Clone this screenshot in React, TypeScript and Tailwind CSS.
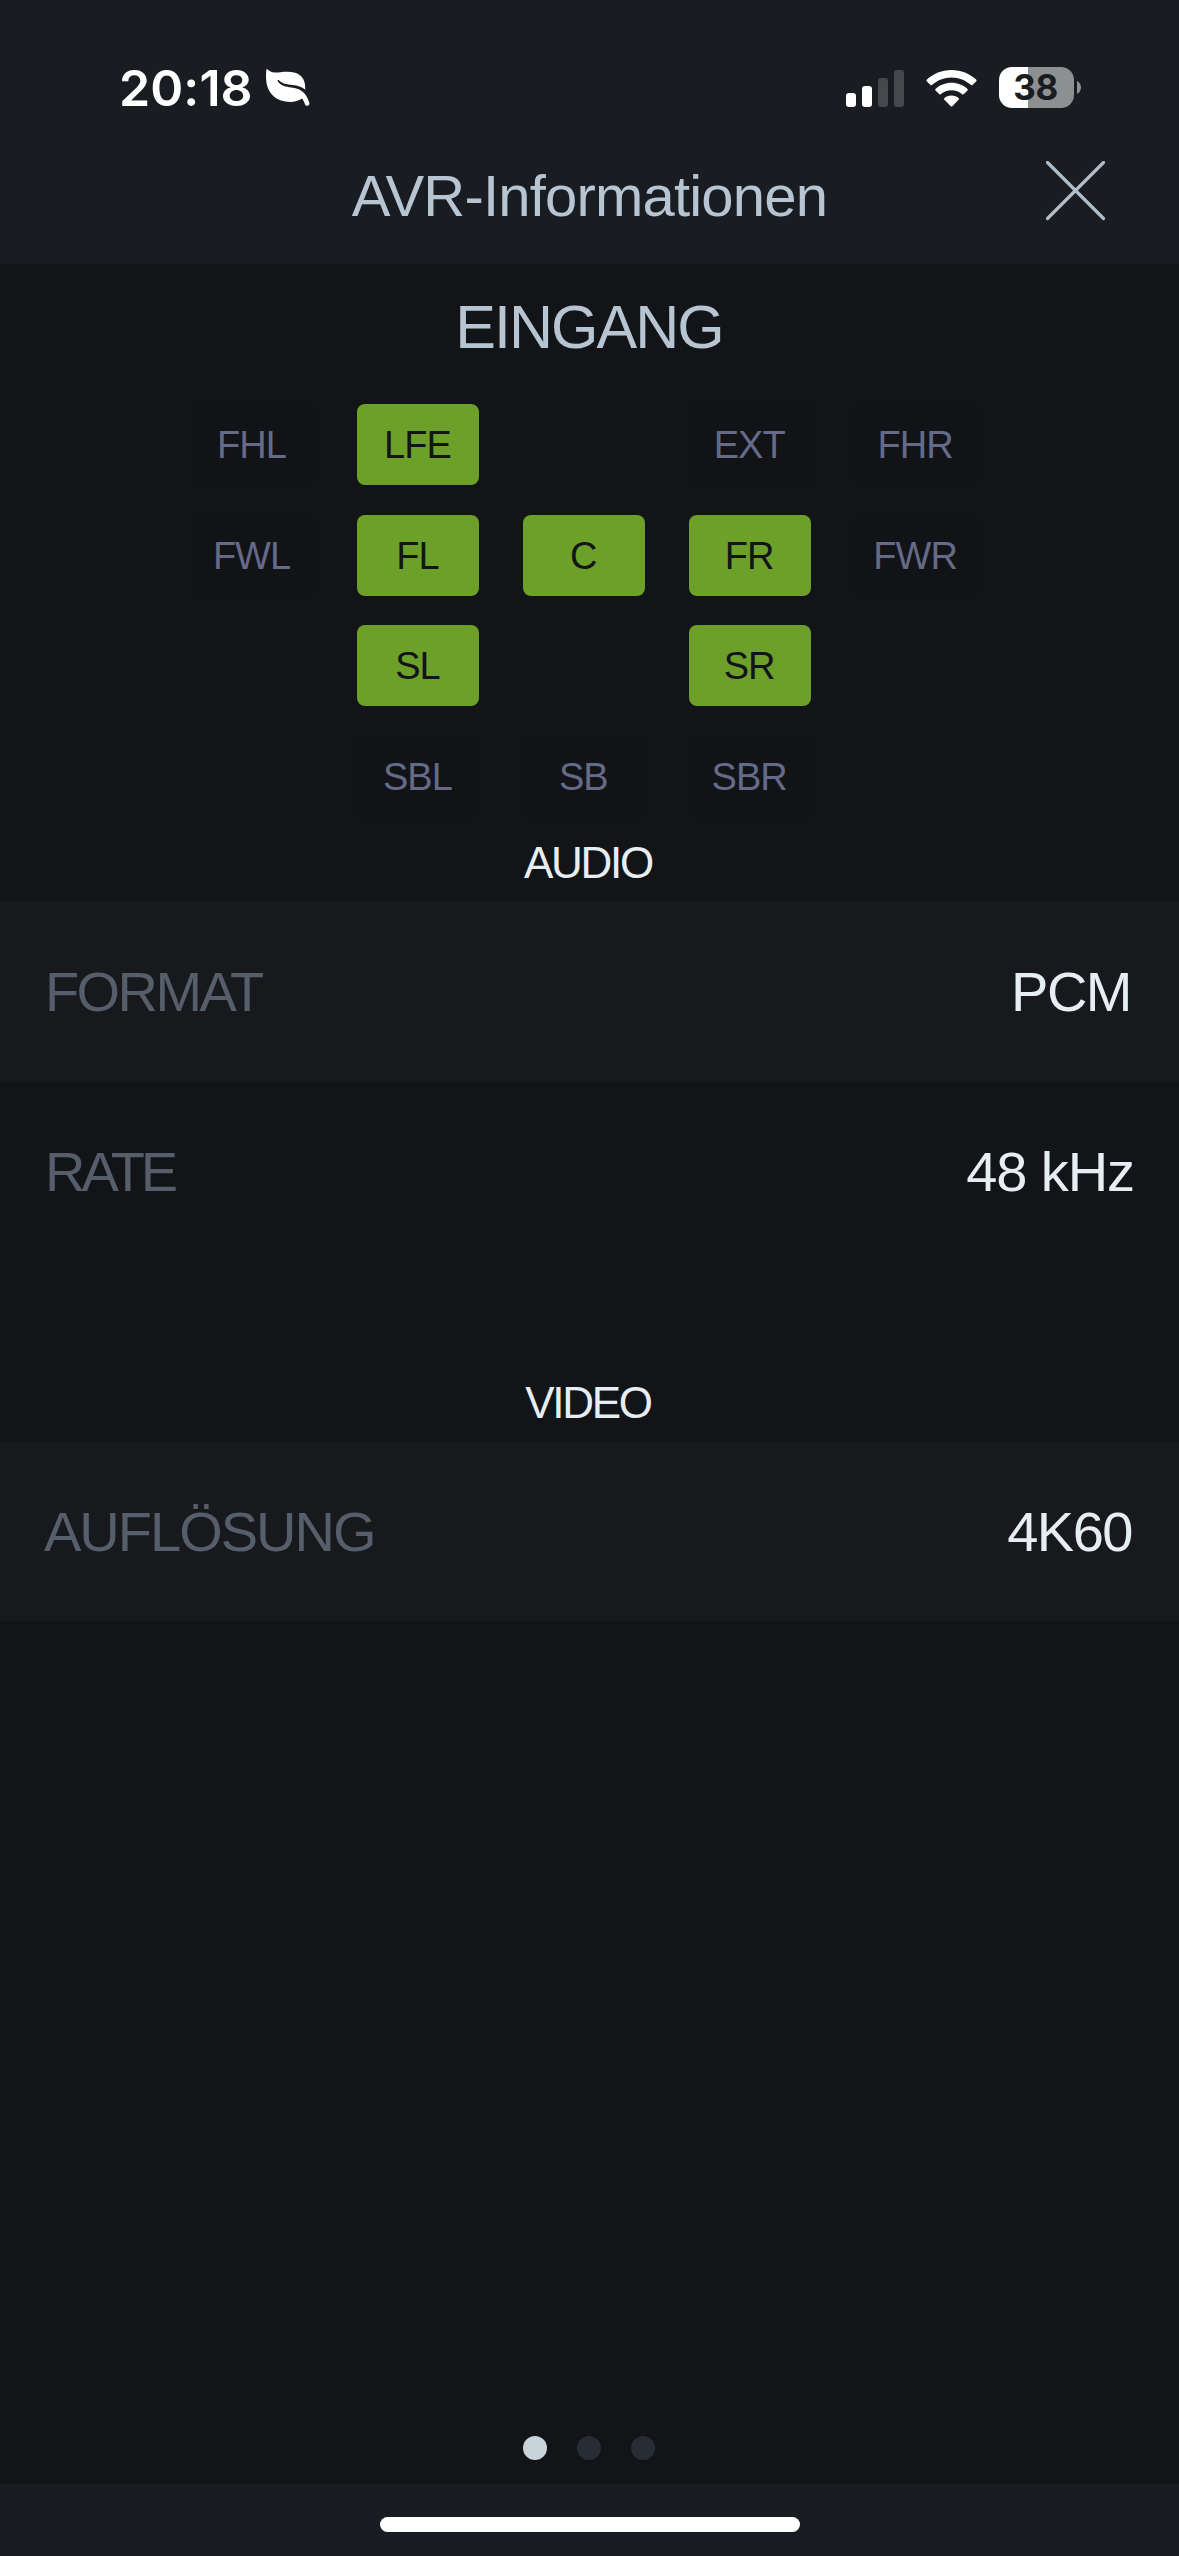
import { clsx } from "clsx";

type Speaker = { label: string; active?: boolean } | null;

const speakers: Speaker[] = [
  { label: "FHL" },
  { label: "LFE", active: true },
  null,
  { label: "EXT" },
  { label: "FHR" },
  { label: "FWL" },
  { label: "FL", active: true },
  { label: "C", active: true },
  { label: "FR", active: true },
  { label: "FWR" },
  null,
  { label: "SL", active: true },
  null,
  { label: "SR", active: true },
  null,
  null,
  { label: "SBL" },
  { label: "SB" },
  { label: "SBR" },
  null,
];

function LeafIcon() {
  return (
    <svg width="46" height="40" viewBox="0 0 46 40" fill="none">
      <path
        d="M2.6 1.4C6 4.6 10.5 4.7 15.5 4.2C22 3.5 30 3.2 35 7.2C39 10.4 40.6 15.5 40.2 21.8C36.8 18.6 32.6 17.4 27.5 16.9C21.5 16.3 17 15.6 14 12.2C13.2 11.4 12.2 12.3 12.8 13.3C15.6 17.8 20.6 18.9 26.5 19.5C32 20.1 36.2 21.7 39.3 25.2C41.6 27.8 43 31 44.3 34.8C45.2 37.6 41.2 39 40 36.4C39.2 34.4 38.6 32.4 37 30.6C32.4 33.9 26.4 34.6 20.4 33.6C10.8 32 3.4 25.4 1.6 15.4C.8 10.6 .9 6.2 1.3 2C1.4 1.1 2 .8 2.6 1.4Z"
        fill="#fff"
      />
    </svg>
  );
}

function SignalIcon() {
  return (
    <svg width="58" height="38" viewBox="0 0 58 38">
      <rect x="0" y="24" width="10" height="14" rx="3" fill="#fff" />
      <rect x="16" y="17" width="10" height="21" rx="3" fill="#fff" />
      <rect x="32" y="9" width="10" height="29" rx="3" fill="#47484c" />
      <rect x="48" y="1" width="10" height="37" rx="3" fill="#47484c" />
    </svg>
  );
}

function WifiIcon() {
  return (
    <svg width="51" height="38" viewBox="0 0 51 38" fill="#fff">
      <path d="M25.5 1C35 1 43.800 4.600 50.300 10.800Q51 11.500 50.300 12.200L46.500 16Q45.800 16.600 45.100 16C39.800 11.200 32.900 8.400 25.500 8.400S11.200 11.200 5.900 16Q5.200 16.600 4.500 16L.7 12.200Q0 11.500.7 10.800C7.200 4.600 16 1 25.500 1Z" />
      <path d="M25.500 13.800C31.700 13.800 37.300 16.100 41.500 20Q42.200 20.700 41.500 21.400L37.600 25.200Q36.900 25.800 36.200 25.200C33.300 22.700 29.600 21.200 25.500 21.200S17.700 22.700 14.800 25.200Q14.100 25.800 13.400 25.200L9.500 21.400Q8.800 20.700 9.500 20C13.700 16.100 19.300 13.800 25.500 13.800Z" />
      <path d="M25.500 26.500C28.300 26.500 30.800 27.500 32.800 29.200Q33.500 29.900 32.800 30.600L26.300 37.200Q25.500 37.900 24.700 37.200L18.200 30.600Q17.500 29.900 18.200 29.200C20.200 27.500 22.700 26.500 25.500 26.500Z" />
    </svg>
  );
}

function Battery() {
  return (
    <div className="flex items-center gap-[3px]">
      <div className="flex h-[41px] w-[75px] items-center justify-center rounded-[13px] bg-linear-to-r from-white from-[29px] to-[#8e8f91] to-[29px] pr-0.5 font-[Inter,sans-serif] text-[35px] leading-[41px] font-bold tracking-[-0.5px] text-[#191c21]">
        38
      </div>
      <svg width="4" height="13" viewBox="0 0 4 13">
        <path d="M0 0C2.400 1.100 4 3.600 4 6.500S2.400 11.900 0 13Z" fill="#8e8f91" />
      </svg>
    </div>
  );
}

function StatusBar() {
  return (
    <div className="flex h-32 items-center justify-between pt-[47px] pr-[98px] pl-[119px]">
      <div className="flex items-center">
        <span className="font-[Inter,sans-serif] text-[50px] leading-[50px] font-semibold tracking-[0.1px] text-white">
          20:18
        </span>
        <span className="ml-3">
          <LeafIcon />
        </span>
      </div>
      <div className="flex items-center">
        <SignalIcon />
        <span className="mr-[22px] ml-[22px]">
          <WifiIcon />
        </span>
        <Battery />
      </div>
    </div>
  );
}

function TitleBar() {
  return (
    <div className="grid h-[136px] grid-cols-[1fr_auto_1fr] items-center">
      <span />
      <h1 className="text-[58px] leading-[60px] tracking-[-0.8px] text-[#b7c4d1]">
        AVR-Informationen
      </h1>
      <button
        aria-label="Schließen"
        className="mt-[33px] mr-[73px] self-start justify-self-end"
      >
        <svg width="60" height="60" viewBox="0 0 60 60" fill="none">
          <path
            d="M1.500 1.500L57.500 57.500M57.500 1.500L1.500 57.500"
            stroke="#b0bdc9"
            strokeWidth="3.2"
            strokeLinecap="round"
          />
        </svg>
      </button>
    </div>
  );
}

function SpeakerGrid() {
  return (
    <div className="ml-[191.500px] grid grid-cols-[repeat(5,121.500px)] gap-x-[44.400px] gap-y-[29.600px]">
      {speakers.map((speaker, i) =>
        speaker ? (
          <div
            key={i}
            className={clsx(
              "flex h-[81px] items-center justify-center rounded-lg pt-px pr-[1.500px] text-[38px] leading-none tracking-[-1px]",
              speaker.active
                ? "bg-[#6da029] text-[#121418]"
                : "bg-[#111316] text-[#646a87]"
            )}
          >
            {speaker.label}
          </div>
        ) : (
          <span key={i} />
        )
      )}
    </div>
  );
}

function SectionTitle({ children }: { children: string }) {
  return (
    <h3 className="pr-[3px] text-center text-[44px] leading-[76px] tracking-[-2.300px] text-[#e6eef3]">
      {children}
    </h3>
  );
}

type InfoRowProps = {
  label: string;
  value: string;
  shaded?: boolean;
  labelClass?: string;
  valueClass?: string;
};

function InfoRow({ label, value, shaded, labelClass, valueClass }: InfoRowProps) {
  return (
    <div
      className={clsx(
        "flex h-[180px] items-center justify-between pt-0.5 pr-[46px] pl-[45px] text-[56px] leading-none",
        shaded && "bg-[#17191c]"
      )}
    >
      <span className={clsx("text-[#565d6b]", labelClass)}>{label}</span>
      <span className={clsx("text-[#e6eef3]", valueClass)}>{value}</span>
    </div>
  );
}

export default function App() {
  return (
    <div className="flex h-[2556px] w-[1179px] flex-col overflow-hidden bg-[#121418] font-['Liberation_Sans',Arial,sans-serif]">
      <header className="bg-[#191c21]">
        <StatusBar />
        <TitleBar />
      </header>

      <main className="flex flex-1 flex-col">
        <h2 className="mb-3.5 pr-px text-center text-[61px] leading-[126px] tracking-[-2px] text-[#b7c4d1]">
          EINGANG
        </h2>
        <SpeakerGrid />

        <section className="pt-2">
          <SectionTitle>AUDIO</SectionTitle>
          <InfoRow
            label="FORMAT"
            value="PCM"
            shaded
            labelClass="tracking-[-2.600px]"
            valueClass="mr-0.5 tracking-[-1.500px]"
          />
          <InfoRow
            label="RATE"
            value="48 kHz"
            labelClass="tracking-[-4px]"
            valueClass="-mr-px tracking-[-1.100px]"
          />
        </section>

        <section className="pt-[104px]">
          <SectionTitle>VIDEO</SectionTitle>
          <InfoRow
            label="AUFLÖSUNG"
            value="4K60"
            shaded
            labelClass="-ml-px tracking-[-2px]"
            valueClass="mr-px tracking-[-1.500px]"
          />
        </section>

        <div className="mt-auto flex justify-center gap-[30px] pr-px pb-6">
          <span className="size-6 rounded-full bg-[#c8d4dc]" />
          <span className="size-6 rounded-full bg-[#272d37]" />
          <span className="size-6 rounded-full bg-[#272d37]" />
        </div>
      </main>

      <footer className="flex h-[72px] justify-center bg-[#191c21] pt-[33px]">
        <div className="h-[15px] w-[420px] rounded-full bg-white" />
      </footer>
    </div>
  );
}
